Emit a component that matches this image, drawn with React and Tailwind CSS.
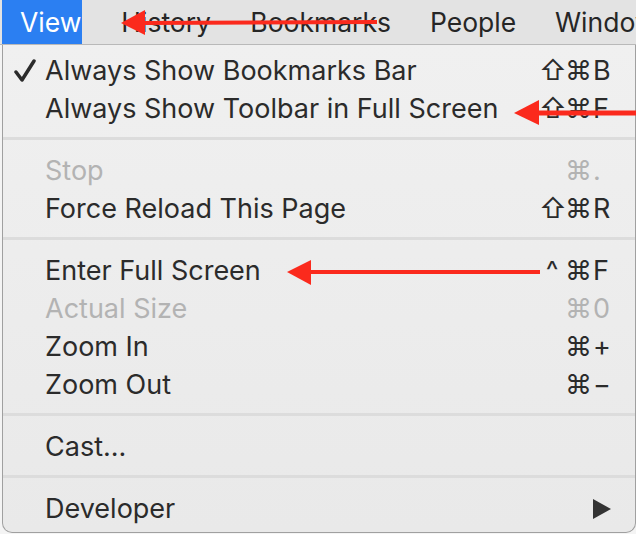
const font = { fontFamily: "Inter, 'DejaVu Sans', sans-serif" };

const groups = [
  [
    { label: 'Always Show Bookmarks Bar', mods: ['⇧', '⌘'], keyChar: 'B', checked: true },
    { label: 'Always Show Toolbar in Full Screen', mods: ['⇧', '⌘'], keyChar: 'F' },
  ],
  [
    { label: 'Stop', mods: ['⌘'], keyChar: '.', disabled: true },
    { label: 'Force Reload This Page', mods: ['⇧', '⌘'], keyChar: 'R' },
  ],
  [
    { label: 'Enter Full Screen', mods: ['^', '⌘'], keyChar: 'F' },
    { label: 'Actual Size', mods: ['⌘'], keyChar: '0', disabled: true },
    { label: 'Zoom In', mods: ['⌘'], keyChar: '+' },
    { label: 'Zoom Out', mods: ['⌘'], keyChar: '−' },
  ],
  [{ label: 'Cast...' }],
  [{ label: 'Developer', submenu: true }],
];

export default function App() {
  return (
    <div className="relative w-[636px] h-[534px] overflow-hidden bg-[#f4f4f4]" style={font}>
      {/* Menu bar */}
      <div className="flex h-[45px] bg-[#e3e3e3] border-b border-[#b9b9b9] text-[26.5px] text-[#262626]">
        <div className="w-[2px]" />
        <div className="w-[81px] bg-[#2b7ff2] text-white pl-[18px] pt-[2px] flex items-center">View</div>
        <MenuTitle width="w-[130px]">History</MenuTitle>
        <MenuTitle width="w-[180px]">Bookmarks</MenuTitle>
        <MenuTitle width="w-[125px]">People</MenuTitle>
        <MenuTitle width="w-[120px]">Window</MenuTitle>
      </div>

      {/* Dropdown */}
      <div className="ml-[2px] w-[634px] h-[488px] bg-gradient-to-b from-[#f0f0f0] to-[#e9e9e9] border-l border-r border-b border-[#a0a0a0] rounded-b-[10px] pt-[7px] text-[27px]">
        {groups.map((items, gi) => (
          <div key={gi}>
            {gi > 0 && (
              <div className="h-[24px] pt-[9px]">
                <div className="h-[3px] bg-[#dcdcdc]" />
              </div>
            )}
            {items.map((item) => (
              <MenuItem key={item.label} {...item} />
            ))}
          </div>
        ))}
      </div>

      {/* Red annotation arrows */}
      <svg className="absolute inset-0 pointer-events-none" width="636" height="534">
        <g fill="#fb2a1d" stroke="#fb2a1d">
          <line x1="143" y1="23" x2="377" y2="22" strokeWidth="4" />
          <polygon points="121,23 145,10 145,35" stroke="none" />
          <line x1="537" y1="113" x2="640" y2="113" strokeWidth="5" />
          <polygon points="514,113 539,100 539,125" stroke="none" />
          <line x1="309" y1="272" x2="540" y2="272" strokeWidth="4" />
          <polygon points="287,272 311,260 311,285" stroke="none" />
        </g>
      </svg>
    </div>
  );
}

function MenuTitle({ width, children }) {
  return <div className={`${width} pl-[39px] pt-[2px] flex items-center whitespace-nowrap`}>{children}</div>;
}

function MenuItem({ label, mods = [], keyChar, checked, disabled, submenu }) {
  const color = disabled ? 'text-[#b3b3b3]' : 'text-[#2b2b2b]';
  return (
    <div className={`h-[38px] flex items-center pl-[11px] pr-[22px] ${color}`}>
      <div className="w-[31px] flex items-center">
        {checked && (
          <svg width="22" height="24" viewBox="0 0 22 24">
            <path d="M2 13 L8 21 L20 2" fill="none" stroke="#2b2b2b" strokeWidth="3.5" strokeLinecap="round" strokeLinejoin="round" />
          </svg>
        )}
      </div>
      <span className="flex-1 whitespace-nowrap">{label}</span>
      <div className="flex">
        {mods.map((m, i) => (
          <span key={i} className="w-[26px] text-center">{m}</span>
        ))}
      </div>
      <div className="w-[22px] pl-[2px] flex items-center">
        {keyChar}
        {submenu && (
          <svg width="18" height="20" viewBox="0 0 18 20">
            <polygon points="0,0 18,10 0,20" fill="#333333" />
          </svg>
        )}
      </div>
    </div>
  );
}
